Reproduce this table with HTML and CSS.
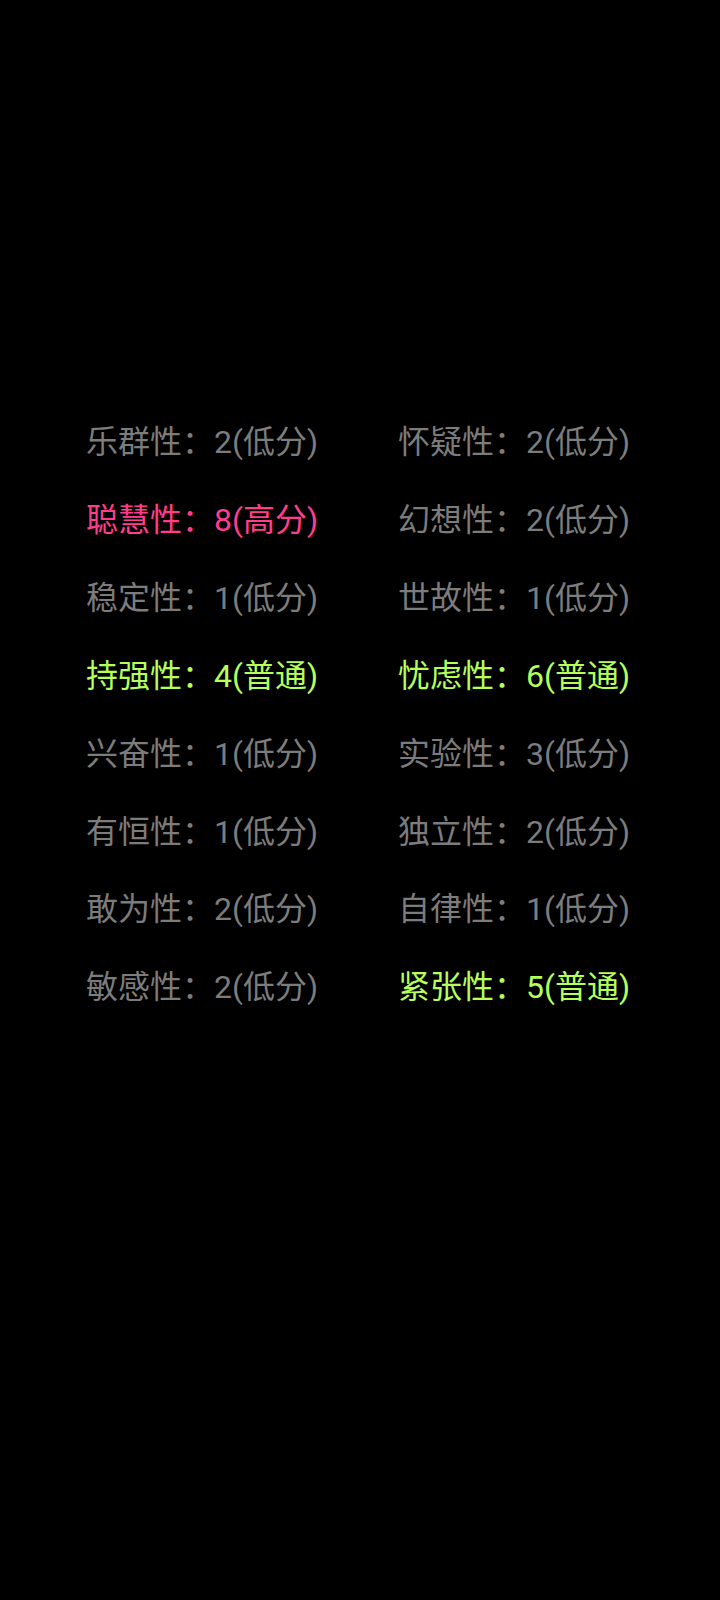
FILE: index.html
```html
<!DOCTYPE html>
<html lang="zh-CN">
<head>
    <meta charset="UTF-8">
    <meta name="viewport" content="width=device-width, initial-scale=1.0">
    <title>16PF 结果</title>
    <link rel="stylesheet" href="styles.css">
</head>
<body>

    <!-- 十六种人格因素 -->
    <div class="factors">
        <div class="item">乐群性：2(低分)</div>
        <div class="item">怀疑性：2(低分)</div>
        <div class="item high">聪慧性：8(高分)</div>
        <div class="item">幻想性：2(低分)</div>
        <div class="item">稳定性：1(低分)</div>
        <div class="item">世故性：1(低分)</div>
        <div class="item mid">持强性：4(普通)</div>
        <div class="item mid">忧虑性：6(普通)</div>
        <div class="item">兴奋性：1(低分)</div>
        <div class="item">实验性：3(低分)</div>
        <div class="item">有恒性：1(低分)</div>
        <div class="item">独立性：2(低分)</div>
        <div class="item">敢为性：2(低分)</div>
        <div class="item">自律性：1(低分)</div>
        <div class="item">敏感性：2(低分)</div>
        <div class="item mid">紧张性：5(普通)</div>
    </div>

</body>
</html>
```

FILE: styles.css
```css
/* 基础 */
body {
    margin: 0;
    background: #000;
    font-family: Roboto, "Noto Sans CJK SC", sans-serif;
    min-height: 1600px;
}

/* 两列网格 */
.factors {
    display: grid;
    grid-template-columns: 312px 312px;
    padding: 404px 0 0 86px;
}

.item {
    color: #7c7c7c;
    font-size: 32px;
    line-height: 77.9px;
    white-space: nowrap;
}

/* 高分 */
.item.high {
    color: #ff3d8f;
}

/* 普通 */
.item.mid {
    color: #b4ff5a;
}
```
